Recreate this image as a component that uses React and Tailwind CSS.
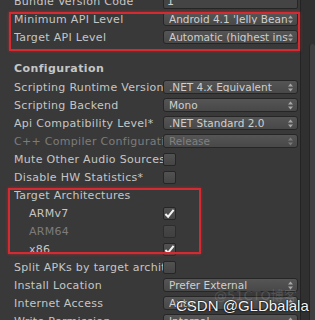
import React from 'react';

const Arrows = () => (
  <svg width="5" height="9" viewBox="0 0 5 9" className="shrink-0">
    <path d="M2.5 0.5 L5 3.5 L0 3.5 Z" fill="#a8a8a8" />
    <path d="M2.5 8.5 L5 5.5 L0 5.5 Z" fill="#a8a8a8" />
  </svg>
);

const Dropdown = ({ value, dim }) => (
  <div className="w-[135px] h-[14px] rounded-[3px] border border-[#262626] bg-gradient-to-b from-[#555555] to-[#484848] flex items-center pl-[5px] pr-[4px] overflow-hidden text-[10.5px]">
    <span className={`flex-1 whitespace-nowrap overflow-hidden ${dim ? 'text-[#808080]' : 'text-[#cfcfcf]'}`}>{value}</span>
    <span className={dim ? 'opacity-50' : ''}><Arrows /></span>
  </div>
);

const Checkbox = ({ checked }) => (
  <div className="w-[13px] h-[13px] rounded-[2px] border border-[#262626] bg-gradient-to-b from-[#525252] to-[#454545] flex items-center justify-center">
    {checked && (
      <svg width="12" height="11" viewBox="0 0 12 11">
        <path d="M1.5 6 L4.5 9 L10.5 1.5" fill="none" stroke="#f4f4f4" strokeWidth="2.2" />
      </svg>
    )}
  </div>
);

const Row = ({ label, dim, indent, children }) => (
  <div className="h-[18px] flex items-center">
    <div className={`w-[149px] shrink-0 whitespace-nowrap overflow-hidden tracking-[0.3px] ${indent ? 'pl-[15px]' : ''} ${dim ? 'text-[#7c7c7c]' : 'text-[#c6c6c6]'}`}>
      {label}
    </div>
    {children}
  </div>
);

export default function App() {
  return (
    <div className="w-[315px] h-[320px] overflow-hidden bg-[#393939] flex text-[11px] leading-none" style={{ fontFamily: '"DejaVu Sans", "Noto Sans CJK SC", sans-serif' }}>
      <div className="relative w-[301px] shrink-0 pl-[14px] border-r border-[#232323]">
        <div className="-mt-[8px] flex flex-col">
          <Row label="Bundle Version Code">
            <div className="w-[135px] h-[15px] rounded-[2px] border border-[#262626] bg-[#444444] flex items-center pl-[3px] text-[#cfcfcf]">1</div>
          </Row>
          <Row label="Minimum API Level"><Dropdown value="Android 4.1 'Jelly Bean'" /></Row>
          <Row label="Target API Level"><Dropdown value="Automatic (highest installed)" /></Row>
          <div className="h-[13px]" />
          <div className="h-[18px] flex items-center font-bold text-[#c6c6c6] tracking-[0.4px]">Configuration</div>
          <div className="h-[1px]" />
          <Row label="Scripting Runtime Version"><Dropdown value=".NET 4.x Equivalent" /></Row>
          <Row label="Scripting Backend"><Dropdown value="Mono" /></Row>
          <Row label="Api Compatibility Level*"><Dropdown value=".NET Standard 2.0" /></Row>
          <Row label="C++ Compiler Configuration" dim><Dropdown value="Release" dim /></Row>
          <Row label="Mute Other Audio Sources*"><Checkbox /></Row>
          <Row label="Disable HW Statistics*"><Checkbox /></Row>
          <Row label="Target Architectures" />
          <Row label="ARMv7" indent><Checkbox checked /></Row>
          <Row label="ARM64" indent dim><div className="opacity-60"><Checkbox /></div></Row>
          <Row label="x86" indent><Checkbox checked /></Row>
          <Row label="Split APKs by target architecture"><Checkbox /></Row>
          <Row label="Install Location"><Dropdown value="Prefer External" /></Row>
          <Row label="Internet Access"><Dropdown value="Auto" /></Row>
          <Row label="Write Permission"><Dropdown value="Internal" /></Row>
        </div>

        {/* red annotation boxes */}
        <div className="absolute left-[9px] top-[12px] w-[291px] h-[39px] border-2 border-[#d42a32] shadow-[0_0_3px_rgba(220,40,50,0.6)]" />
        <div className="absolute left-[8px] top-[188px] w-[193px] h-[66px] border-2 border-[#d42a32] shadow-[0_0_3px_rgba(220,40,50,0.6)]" />

        {/* watermarks */}
        <div className="absolute left-[214px] top-[289px] text-[13px] text-white/15 whitespace-nowrap">@51CTO博客</div>
        <div className="absolute left-[176px] top-[298px] text-[15px] text-[#f4f4f4] whitespace-nowrap [text-shadow:0_0_2px_#000,0_0_1px_#000]" style={{ fontFamily: '"Liberation Sans", sans-serif' }}>CSDN @GLDbalala</div>
      </div>
      <div className="flex-1 bg-[#303030] flex justify-end">
        <div className="w-[6px] mt-[44px] rounded-t-[3px] bg-[#3f3f3f] border-l border-[#262626]" />
      </div>
    </div>
  );
}
